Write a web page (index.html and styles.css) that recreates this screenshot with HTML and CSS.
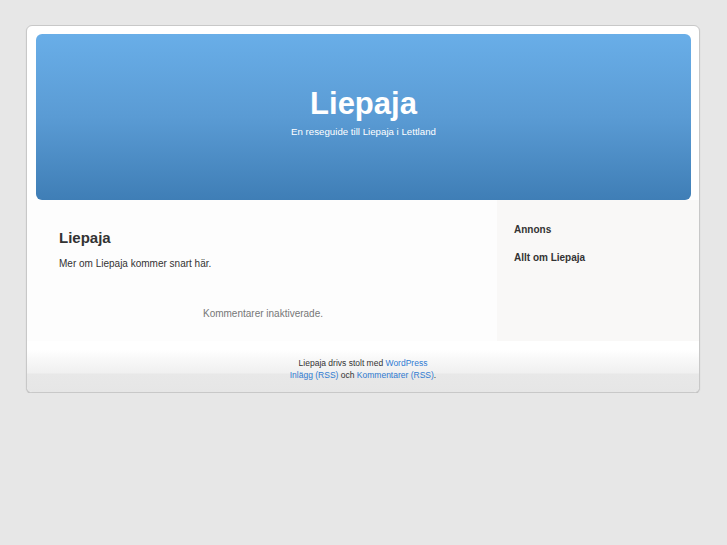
FILE: index.html
```html
<!DOCTYPE html>
<html lang="sv">
<head>
<meta charset="utf-8">
<title>Liepaja</title>
<link rel="stylesheet" href="styles.css">
</head>
<body>
<div class="page">
  <header class="header">
    <h1 class="site-title">Liepaja</h1>
    <div class="site-desc">En reseguide till Liepaja i Lettland</div>
  </header>
  <div class="body">
    <main class="content">
      <h2 class="post-title">Liepaja</h2>
      <p class="post-text">Mer om Liepaja kommer snart här.</p>
      <p class="nocomments">Kommentarer inaktiverade.</p>
    </main>
    <aside class="sidebar">
      <h3 class="widget-title">Annons</h3>
      <h3 class="widget-title">Allt om Liepaja</h3>
    </aside>
  </div>
  <footer class="footer">
    <p>Liepaja drivs stolt med <a href="#">WordPress</a><br>
    <a href="#">Inlägg (RSS)</a> och <a href="#">Kommentarer (RSS)</a>.</p>
  </footer>
</div>
</body>
</html>
```

FILE: styles.css
```css
html, body {
  margin: 0;
  padding: 0;
}
body {
  background: #e7e7e7;
  font-family: "Liberation Sans", Arial, sans-serif;
  color: #333;
}
.page {
  width: 672px;
  margin: 25px 0 0 26px;
  background: #fff;
  border: 1px solid #c8c8c8;
  border-radius: 6px;
  box-shadow: 0 1px 1px #bdbdbd;
  overflow: hidden;
  padding-top: 8px;
}
.header {
  margin: 0 8px 0 9px;
  height: 166px;
  border-radius: 6px;
  background: linear-gradient(to bottom, #69aee8 0%, #5a9bd4 50%, #3f7eb6 100%);
  text-align: center;
  color: #fff;
}
.site-title {
  margin: 0;
  padding-top: 50px;
  font-size: 31px;
  line-height: 40px;
  font-weight: bold;
}
.site-desc {
  font-size: 9.7px;
  line-height: 14px;
  margin-top: 1px;
}
.body {
  display: flex;
}
.content {
  flex: 1;
  padding: 28px 30px 0 32px;
  background: #fdfdfd;
}
.post-title {
  margin: 0;
  font-size: 15px;
  line-height: 20px;
  font-weight: bold;
  color: #333;
}
.post-text {
  margin: 9px 0 0;
  font-size: 10px;
  line-height: 14px;
}
.nocomments {
  margin: 36px 0 0;
  text-align: center;
  font-size: 10px;
  line-height: 14px;
  color: #777;
}
.sidebar {
  width: 185px;
  height: 118px;
  background: #f9f8f7;
  padding: 23px 0 0 17px;
}
.widget-title {
  margin: 0 0 15px;
  font-size: 10px;
  line-height: 13px;
  font-weight: bold;
  color: #333;
}
.footer {
  margin-top: 9px;
  height: 42px;
  background: linear-gradient(to bottom, #ffffff 0px, #f9f9f9 8px, #f3f3f3 18px, #f0f0f0 23px, #e8e8e8 24px, #e6e6e6 100%);
  text-align: center;
  font-size: 8.5px;
  line-height: 12px;
  color: #333;
}
.footer p {
  margin: 0;
  padding-top: 7px;
}
.footer a {
  color: #2f7bd2;
  text-decoration: none;
}
```
